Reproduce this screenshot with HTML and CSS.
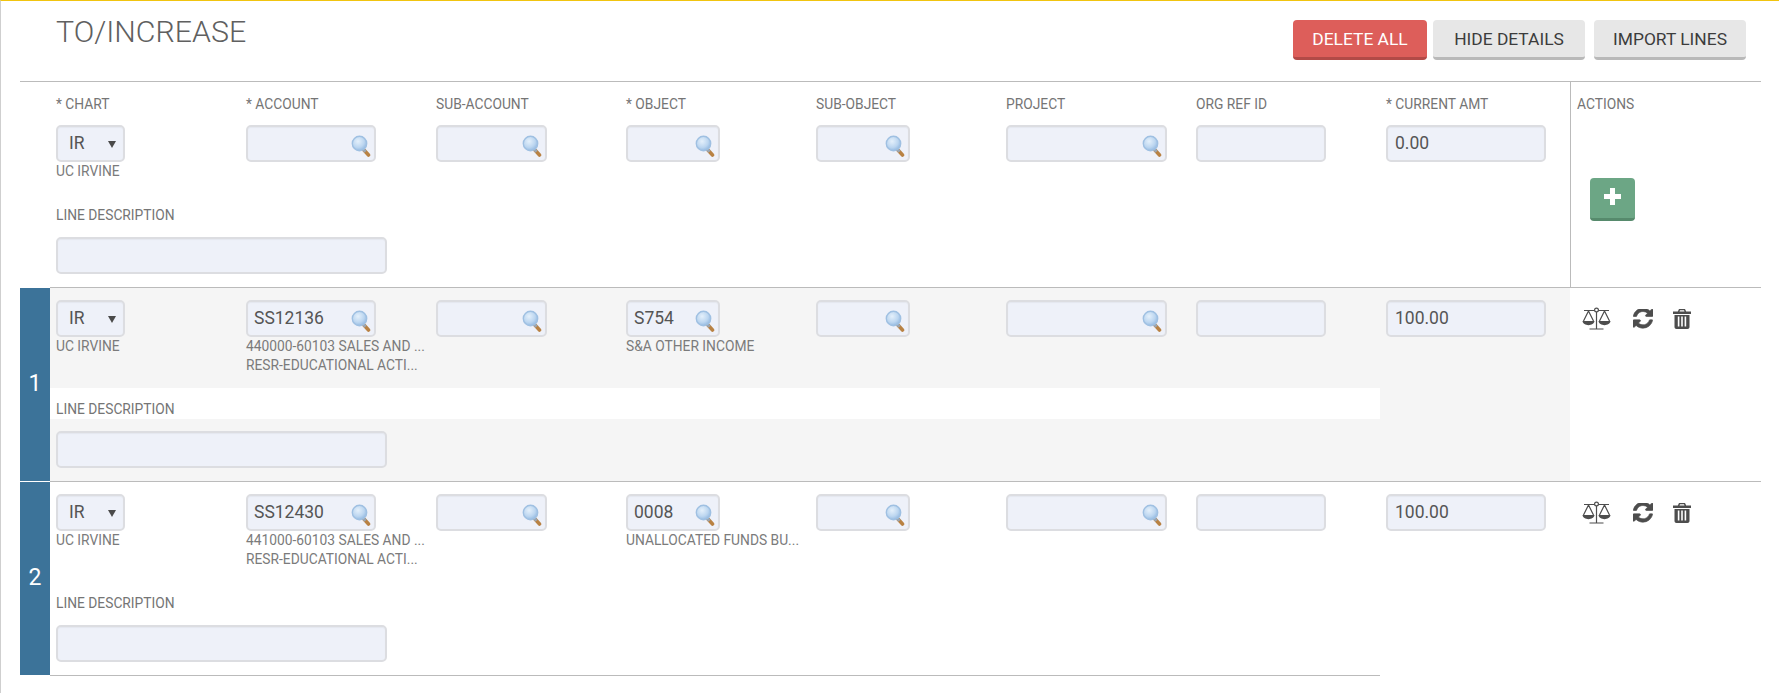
FILE: index.html
```html
<!DOCTYPE html>
<html lang="en">
<head>
<meta charset="utf-8">
<title>To/Increase</title>
<link rel="stylesheet" href="styles.css">
</head>
<body>
<svg class="defs" width="0" height="0" aria-hidden="true">
  <defs>
    <radialGradient id="lens" cx="40%" cy="35%" r="70%">
      <stop offset="0" stop-color="#e4f0fb"/>
      <stop offset="0.6" stop-color="#bcd6f0"/>
      <stop offset="1" stop-color="#8fb6df"/>
    </radialGradient>
    <symbol id="mag" viewBox="0 0 20 22">
      <path d="M12.5 14.5l5 5.5" stroke="#b98243" stroke-width="3.6" stroke-linecap="round" fill="none"/>
      <path d="M12.5 14.5l2 2.2" stroke="#9aa6b2" stroke-width="3" fill="none"/>
      <circle cx="8.5" cy="8.5" r="7.2" fill="url(#lens)" stroke="#9fc0e2" stroke-width="1.4"/>
    </symbol>
    <symbol id="scale" viewBox="0 0 29 23">
      <g fill="none" stroke="#4d4d4d" stroke-width="1.2">
        <path d="M2 3.500h10.500M16.500 3.500h10.500"/>
        <circle cx="14.500" cy="3" r="1.900"/>
        <path d="M14.500 5v16.500M7.500 22h14"/>
        <path d="M6.500 4L1.500 14M6.500 4l5 10M22.500 4l-5 10M22.500 4l5 10"/>
      </g>
      <path d="M0.500 14h12c-0.500 5.500-11.500 5.500-12 0zM16.500 14h12c-0.500 5.500-11.500 5.500-12 0z" fill="#4d4d4d"/>
    </symbol>
    <symbol id="refresh" viewBox="0 128 1536 1408">
      <path fill="#4d4d4d" stroke="#4d4d4d" stroke-width="50" d="M1511 928q0 5-1 7-64 268-268 434.500t-478 166.500q-146 0-282.500-55t-243.500-157l-129 129q-19 19-45 19t-45-19-19-45v-448q0-26 19-45t45-19h448q26 0 45 19t19 45-19 45l-137 137q71 66 161 102t187 36q134 0 250-65t186-179q11-17 53-117 8-23 30-23h192q13 0 22.500 9.500t9.500 22.500zm25-800v448q0 26-19 45t-45 19h-448q-26 0-45-19t-19-45 19-45l138-138q-148-137-349-137-134 0-250 65t-186 179q-11 17-53 117-8 23-30 23h-199q-13 0-22.500-9.500t-9.500-22.500v-7q65-268 270-434.500t480-166.500q146 0 284 55.500t245 156.500l130-129q19-19 45-19t45 19 19 45z"/>
    </symbol>
    <symbol id="trash" viewBox="0 0 18 20">
      <path fill="#4d4d4d" d="M6 0h6l1.200 2.600H18v2.400H0V2.600h4.800zM7 1.300L6.500 2.600h5L11 1.300z"/>
      <path fill="#4d4d4d" fill-rule="evenodd" d="M1.500 6h15v12c0 1.200-.8 2-2 2h-11c-1.200 0-2-.8-2-2zM4.800 7.500v10h1.600v-10zM8.200 7.500v10h1.600v-10zM11.600 7.500v10h1.600v-10z"/>
    </symbol>
  </defs>
</svg>

<main class="page">
  <header class="title-bar">
    <h1 class="title">TO/INCREASE</h1>
    <div class="buttons">
      <button class="btn btn-red" type="button">DELETE ALL</button>
      <button class="btn btn-grey btn-hide" type="button">HIDE DETAILS</button>
      <button class="btn btn-grey btn-import" type="button">IMPORT LINES</button>
    </div>
  </header>

  <section class="add-row">
    <div class="add-fields">
      <div class="cols">
        <div class="col"><label class="lbl">* CHART</label><div class="sel"><span>IR</span></div><p class="sub">UC IRVINE</p></div>
        <div class="col"><label class="lbl">* ACCOUNT</label><div class="box w130"><svg class="mag"><use href="#mag"/></svg></div></div>
        <div class="col"><label class="lbl">SUB-ACCOUNT</label><div class="box w111"><svg class="mag"><use href="#mag"/></svg></div></div>
        <div class="col"><label class="lbl">* OBJECT</label><div class="box w94"><svg class="mag"><use href="#mag"/></svg></div></div>
        <div class="col"><label class="lbl">SUB-OBJECT</label><div class="box w94"><svg class="mag"><use href="#mag"/></svg></div></div>
        <div class="col"><label class="lbl">PROJECT</label><div class="box w161"><svg class="mag"><use href="#mag"/></svg></div></div>
        <div class="col"><label class="lbl">ORG REF ID</label><div class="box w130"></div></div>
        <div class="col"><label class="lbl">* CURRENT AMT</label><div class="box w160">0.00</div></div>
      </div>
      <div class="add-desc">
        <label class="lbl">LINE DESCRIPTION</label>
        <div class="box w331"></div>
      </div>
    </div>
    <div class="add-actions">
      <label class="lbl">ACTIONS</label>
      <button class="btn-add" type="button" aria-label="Add">
        <svg width="17" height="17" viewBox="0 0 17 17"><path d="M6 0h5v6h6v5h-6v6H6v-6H0V6h6z" fill="#fff"/></svg>
      </button>
    </div>
  </section>

  <section class="line line-shaded">
    <div class="num">1</div>
    <div class="line-body">
      <div class="line-left">
        <div class="cols line-fields">
          <div class="col"><div class="sel"><span>IR</span></div><p class="sub">UC IRVINE</p></div>
          <div class="col"><div class="box w130">SS12136<svg class="mag"><use href="#mag"/></svg></div><p class="sub">440000-60103 SALES AND ...</p><p class="sub">RESR-EDUCATIONAL ACTI...</p></div>
          <div class="col"><div class="box w111"><svg class="mag"><use href="#mag"/></svg></div></div>
          <div class="col"><div class="box w94">S754<svg class="mag"><use href="#mag"/></svg></div><p class="sub">S&amp;A OTHER INCOME</p></div>
          <div class="col"><div class="box w94"><svg class="mag"><use href="#mag"/></svg></div></div>
          <div class="col"><div class="box w161"><svg class="mag"><use href="#mag"/></svg></div></div>
          <div class="col"><div class="box w130"></div></div>
        </div>
        <div class="desc-label"><label class="lbl">LINE DESCRIPTION</label></div>
        <div class="desc-input"><div class="box w331"></div></div>
      </div>
      <div class="line-amt"><div class="box w160">100.00</div></div>
      <div class="line-actions">
        <svg class="ic-scale"><use href="#scale"/></svg>
        <svg class="ic-refresh"><use href="#refresh"/></svg>
        <svg class="ic-trash"><use href="#trash"/></svg>
      </div>
    </div>
  </section>

  <section class="line line-last">
    <div class="num">2</div>
    <div class="line-body">
      <div class="line-left">
        <div class="cols line-fields">
          <div class="col"><div class="sel"><span>IR</span></div><p class="sub">UC IRVINE</p></div>
          <div class="col"><div class="box w130">SS12430<svg class="mag"><use href="#mag"/></svg></div><p class="sub">441000-60103 SALES AND ...</p><p class="sub">RESR-EDUCATIONAL ACTI...</p></div>
          <div class="col"><div class="box w111"><svg class="mag"><use href="#mag"/></svg></div></div>
          <div class="col"><div class="box w94">0008<svg class="mag"><use href="#mag"/></svg></div><p class="sub">UNALLOCATED FUNDS BU...</p></div>
          <div class="col"><div class="box w94"><svg class="mag"><use href="#mag"/></svg></div></div>
          <div class="col"><div class="box w161"><svg class="mag"><use href="#mag"/></svg></div></div>
          <div class="col"><div class="box w130"></div></div>
        </div>
        <div class="desc-label"><label class="lbl">LINE DESCRIPTION</label></div>
        <div class="desc-input"><div class="box w331"></div></div>
      </div>
      <div class="line-amt"><div class="box w160">100.00</div></div>
      <div class="line-actions">
        <svg class="ic-scale"><use href="#scale"/></svg>
        <svg class="ic-refresh"><use href="#refresh"/></svg>
        <svg class="ic-trash"><use href="#trash"/></svg>
      </div>
    </div>
  </section>
</main>
</body>
</html>
```

FILE: styles.css
```css
* { box-sizing: border-box; }
html, body { margin: 0; padding: 0; }
body {
  height: 693px;
  overflow: hidden;
  background: #fff;
  border-top: 1px solid #f1c40f;
  border-left: 1px solid #cfcfcf;
  font-family: Roboto, "Liberation Sans", sans-serif;
  color: #757575;
}
.defs { position: absolute; }
.page { width: 1741px; margin-left: 19px; }

.title-bar {
  height: 81px;
  display: flex;
  justify-content: space-between;
  border-bottom: 1px solid #bbb;
  padding-left: 36px;
}
.title {
  margin: 14px 0 0;
  font-size: 30.300px;
  line-height: 34px;
  font-weight: 300;
  color: #606060;
}
.buttons { display: flex; padding: 19px 15px 0 0; height: 60px; }
.btn {
  height: 40px;
  border: 0;
  border-radius: 4px;
  font: 400 17.400px Roboto, sans-serif;
  padding: 0;
  cursor: pointer;
}
.btn-red { width: 134px; background: #dd5e5a; color: #fff; border-bottom: 3px solid #b24a47; }
.btn-grey { width: 152px; background: #e7e7e7; color: #3c3c3c; border-bottom: 3px solid #b9b9b9; }
.btn-hide { margin-left: 6px; }
.btn-import { margin-left: 9px; }

.add-row { display: flex; margin-left: 30px; height: 206px; border-bottom: 1px solid #bbb; }
.add-fields { width: 1520px; }
.cols { display: flex; }
.col { width: 190px; padding-left: 6px; }
.lbl {
  display: block;
  font-size: 13.800px;
  line-height: 16px;
  color: #757575;
}
.add-fields .col .lbl { margin: 14px 0 13px; }
.add-fields .cols { height: 125px; }
.add-desc { padding-left: 6px; }
.add-desc .lbl { margin-bottom: 14px; }

.box, .sel {
  position: relative;
  height: 37px;
  padding-left: 6px;
  background: #eef1f9;
  border: 2px solid #dcdde1;
  border-radius: 5px;
  box-shadow: inset 0 1px 1px rgba(0, 0, 0, 0.04);
  font-size: 17.500px;
  line-height: 33px;
  color: #555;
}
.w130 { width: 130px; }
.w111 { width: 111px; }
.w94 { width: 94px; }
.w161 { width: 161px; }
.w160 { width: 160px; padding-left: 7px; }
.w331 { width: 331px; }
.sel { width: 69px; padding-left: 11px; }
.sel::after {
  content: "";
  position: absolute;
  right: 7px;
  top: 14px;
  border-left: 4px solid transparent;
  border-right: 4px solid transparent;
  border-top: 7px solid #4a4a4a;
}
.mag { position: absolute; right: 3px; top: 8px; width: 20px; height: 22px; }

.sub {
  margin: 0;
  font-size: 13.800px;
  line-height: 16px;
  padding-top: 1px;
  color: #7b7b7b;
  white-space: nowrap;
}
.sub + .sub { padding-top: 3px; }

.add-actions { flex: 1; border-left: 1px solid #bbb; padding-left: 6px; }
.add-actions .lbl { margin: 14px 0 0; }
.btn-add {
  display: flex;
  align-items: center;
  justify-content: center;
  width: 45px;
  height: 43px;
  margin: 66px 0 0 13px;
  padding: 0 0 3px;
  background: #6ca685;
  border: 0;
  border-bottom: 3px solid #568a6c;
  border-radius: 4px;
}

.line { display: flex; height: 194px; }
.num {
  width: 30px;
  margin-bottom: 1px;
  display: flex;
  align-items: center;
  justify-content: center;
  background: #3c7399;
  color: #fff;
  font-size: 23px;
  padding-bottom: 3px;
}
.line-body { flex: 1; display: flex; height: 194px; }
.line-shaded .line-body { border-bottom: 1px solid #bbb; }
.line-left { width: 1330px; }
.line-last .line-left { border-bottom: 1px solid #bbb; }
.line-fields { height: 100px; padding-top: 12px; }
.desc-label { height: 31px; background: #fff; padding: 13px 0 0 6px; }
.desc-input { height: 62px; padding: 12px 0 0 6px; }
.line-shaded .line-fields, .line-shaded .desc-input, .line-shaded .line-amt { background: #f5f5f5; }
.line-amt { width: 190px; padding: 12px 0 0 6px; }
.line-actions { flex: 1; display: flex; padding: 19px 0 0 12px; align-items: flex-start; }
.ic-scale { width: 29px; height: 23px; }
.ic-refresh { width: 20px; height: 20px; margin: 2px 0 0 22px; }
.ic-trash { width: 18px; height: 20px; margin: 2px 0 0 20px; }
```
